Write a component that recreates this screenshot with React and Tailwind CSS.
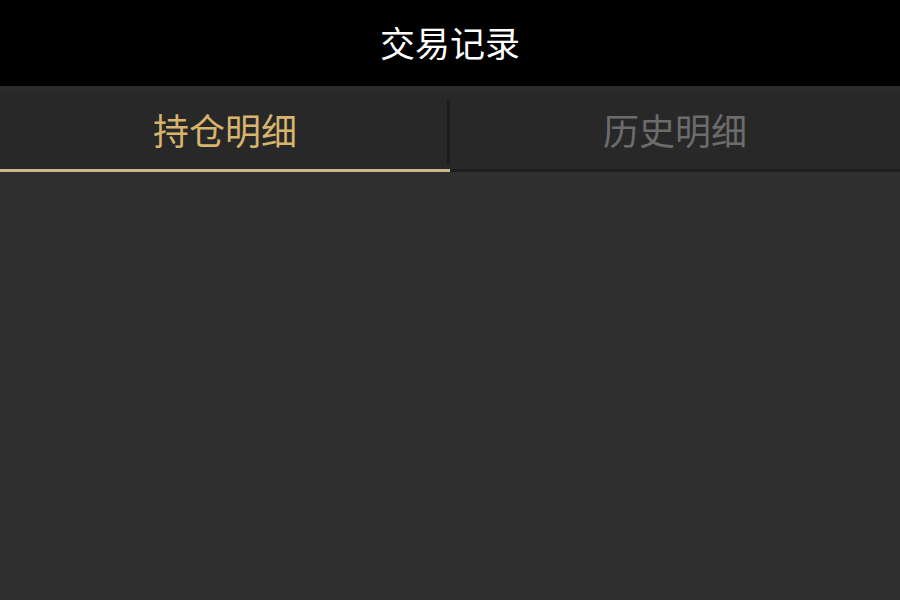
import { useState } from "react";

const tabs = ["持仓明细", "历史明细"];

export default function App() {
  const [active, setActive] = useState(0);

  return (
    <div
      className="flex h-[600px] w-[900px] flex-col bg-[#2f2f2f]"
      style={{ fontFamily: '"Noto Sans CJK SC", "Noto Sans", sans-serif' }}
    >
      {/* 顶部标题栏 */}
      <div className="flex h-[86px] items-center justify-center bg-black pb-[4px]">
        <h1 className="text-[35px] leading-none text-white">交易记录</h1>
      </div>

      {/* 标签栏 */}
      <div className="flex h-[86px] border-t-[6px] border-[#2b2b2b] bg-[#282828]">
        {tabs.map((tab, index) => (
          <button
            key={tab}
            onClick={() => setActive(index)}
            className={`relative flex flex-1 items-center justify-center pb-[6px] text-[36px] leading-none ${
              active === index ? "text-[#d6b46e]" : "text-[#6c6c6c]"
            }`}
          >
            {tab}
            {index === 0 && (
              <span className="absolute right-0 top-[8px] h-[64px] w-[3px] bg-[#1c1c1c]" />
            )}
            <span
              className={`absolute bottom-0 left-0 right-0 h-[3px] ${
                active === index ? "bg-[#cdb78c]" : "bg-[#1e1e1e]"
              }`}
            />
          </button>
        ))}
      </div>

      {/* 内容区 */}
      <div className="flex-1 bg-[#2f2f2f]" />
    </div>
  );
}
